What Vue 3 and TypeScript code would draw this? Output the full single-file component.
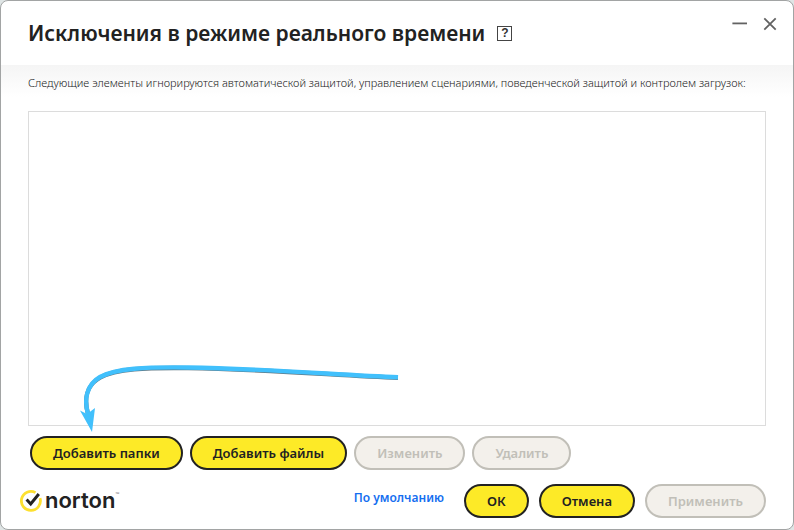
<script setup lang="ts">
import { ref } from 'vue'

interface Action {
  label: string
  disabled: boolean
}

const exclusions = ref<string[]>([])

const listActions: Action[] = [
  { label: 'Добавить папки', disabled: false },
  { label: 'Добавить файлы', disabled: false },
  { label: 'Изменить', disabled: true },
  { label: 'Удалить', disabled: true },
]

const dialogActions: Action[] = [
  { label: 'ОК', disabled: false },
  { label: 'Отмена', disabled: false },
  { label: 'Применить', disabled: true },
]
</script>

<template>
  <main class="dialog">
    <header class="header">
      <h1 class="title">Исключения в режиме реального времени</h1>
      <button class="help" type="button">?</button>
      <div class="window-controls">
        <button class="control" type="button">
          <svg width="16" height="16" viewBox="0 0 16 16" aria-hidden="true">
            <path d="M0.4 7.4H15" />
          </svg>
        </button>
        <button class="control" type="button">
          <svg width="16" height="16" viewBox="0 0 16 16" aria-hidden="true">
            <path d="M2.3 2.3 13.7 13.7M13.7 2.3 2.3 13.7" />
          </svg>
        </button>
      </div>
    </header>

    <section class="body">
      <p class="description">
        Следующие элементы игнорируются автоматической защитой, управлением сценариями, поведенческой защитой и контролем загрузок:
      </p>
      <div class="list-area">
        <ul class="list">
          <li v-for="item in exclusions" :key="item">{{ item }}</li>
        </ul>
        <svg class="pointer" width="330" height="76" viewBox="0 0 330 76" aria-hidden="true">
          <path class="pointer-shadow" d="M320 23.8C262 21.6 185 15.1 110 14.1C68 13.6 38 14.6 22 23.6C8 31.6 6 46 10 60" />
          <path class="pointer-line" d="M320 23.2C262 21 185 14.5 110 13.5C68 13 38 14 22 23C8 31 6 46 10 60" />
          <path class="pointer-head" d="M2 56.5 9 60 17 54 14 78Z" />
        </svg>
      </div>
      <div class="list-actions">
        <button
          v-for="action in listActions"
          :key="action.label"
          class="pill"
          type="button"
          :disabled="action.disabled"
        >{{ action.label }}</button>
      </div>
    </section>

    <footer class="footer">
      <div class="brand">
        <svg width="24" height="24" viewBox="0 0 24 24" aria-hidden="true">
          <path class="brand-ring" d="M15.5 4.6A9.5 9.5 0 1 0 20 10.2" />
          <path class="brand-check" d="M6.6 11.6 10.7 16 18.8 6" />
        </svg>
        <span class="brand-name">norton</span><span class="brand-mark">™</span>
      </div>
      <a class="defaults" href="#">По умолчанию</a>
      <div class="dialog-actions">
        <button
          v-for="action in dialogActions"
          :key="action.label"
          class="pill"
          type="button"
          :disabled="action.disabled"
        >{{ action.label }}</button>
      </div>
    </footer>
  </main>
</template>

<style>
body {
  background: #dfe5e5;
}
</style>

<style scoped>
.dialog {
  box-sizing: border-box;
  min-height: 100vh;
  display: flex;
  flex-direction: column;
  border: 1px solid #a2a4a4;
  border-radius: 8px;
  background: #fff;
  color: #222;
  font-family: 'Noto Sans', 'Open Sans', sans-serif;
}

button {
  font-family: inherit;
  cursor: pointer;
}

.header {
  display: flex;
  align-items: center;
  height: 64px;
  padding: 0 15px 0 27px;
}

.title {
  margin: 0;
  font-size: 21px;
  line-height: 28px;
  font-weight: 600;
}

.help {
  box-sizing: border-box;
  width: 15px;
  height: 15px;
  margin-left: 12px;
  padding: 0;
  border: 1px solid #444;
  background: #fff;
  color: #333;
  font-family: 'Liberation Sans', sans-serif;
  font-size: 12px;
  line-height: 13px;
  font-weight: 700;
}

.window-controls {
  display: flex;
  gap: 14px;
  align-self: flex-start;
  margin-left: auto;
  padding-top: 15px;
}

.control {
  display: flex;
  padding: 0;
  border: 0;
  background: none;
}

.control path {
  fill: none;
  stroke: #626262;
  stroke-width: 1.8;
}

.body {
  flex: 1;
  display: flex;
  flex-direction: column;
  padding: 8px 27px 0;
  background: linear-gradient(#f5f5f5, #fff 32px);
}

.description {
  margin: 0 0 18px;
  color: #222;
  font-size: 11px;
  line-height: 20px;
  font-weight: 300;
}

.list-area {
  position: relative;
  flex: 1;
  display: flex;
}

.list {
  flex: 1;
  margin: 0;
  padding: 0;
  border: 1px solid #dcdcdc;
  background: #fff;
  list-style: none;
}

.pointer {
  position: absolute;
  left: 50px;
  bottom: -4px;
  overflow: visible;
}

.pointer-line,
.pointer-shadow {
  fill: none;
  stroke: #41c0fc;
  stroke-width: 4.4;
}

.pointer-shadow {
  stroke: #607985;
}

.pointer-head {
  fill: #41c0fc;
}

.list-actions {
  display: flex;
  gap: 7px;
  padding: 10px 2px 0;
}

.pill {
  box-sizing: border-box;
  height: 34px;
  padding: 0 21px;
  border: 2px solid #222;
  border-radius: 17px;
  background: #fdea27;
  color: #222;
  font-size: 13px;
  font-weight: 600;
  white-space: nowrap;
}

.pill:disabled {
  border-color: #c1bfb8;
  background: #f3f0eb;
  color: #c1bfb8;
  cursor: default;
}

.footer {
  display: flex;
  align-items: flex-start;
  padding: 14px 27px 11px 19px;
}

.brand {
  display: flex;
  align-items: center;
  padding-top: 4px;
}

.brand-ring {
  fill: none;
  stroke: #fde02f;
  stroke-width: 2.8;
}

.brand-check {
  fill: none;
  stroke: #222;
  stroke-width: 3;
}

.brand-name {
  margin-left: 1px;
  font-family: Inter, sans-serif;
  font-size: 22px;
  line-height: 24px;
  font-weight: 600;
}

.brand-mark {
  align-self: flex-start;
  color: #777;
  font-size: 5px;
  line-height: 12px;
}

.defaults {
  margin-left: auto;
  color: #146ef0;
  font-size: 12px;
  line-height: 28px;
  font-weight: 600;
  text-decoration: none;
}

.dialog-actions {
  display: flex;
  gap: 10px;
  margin-left: 20px;
}
</style>
